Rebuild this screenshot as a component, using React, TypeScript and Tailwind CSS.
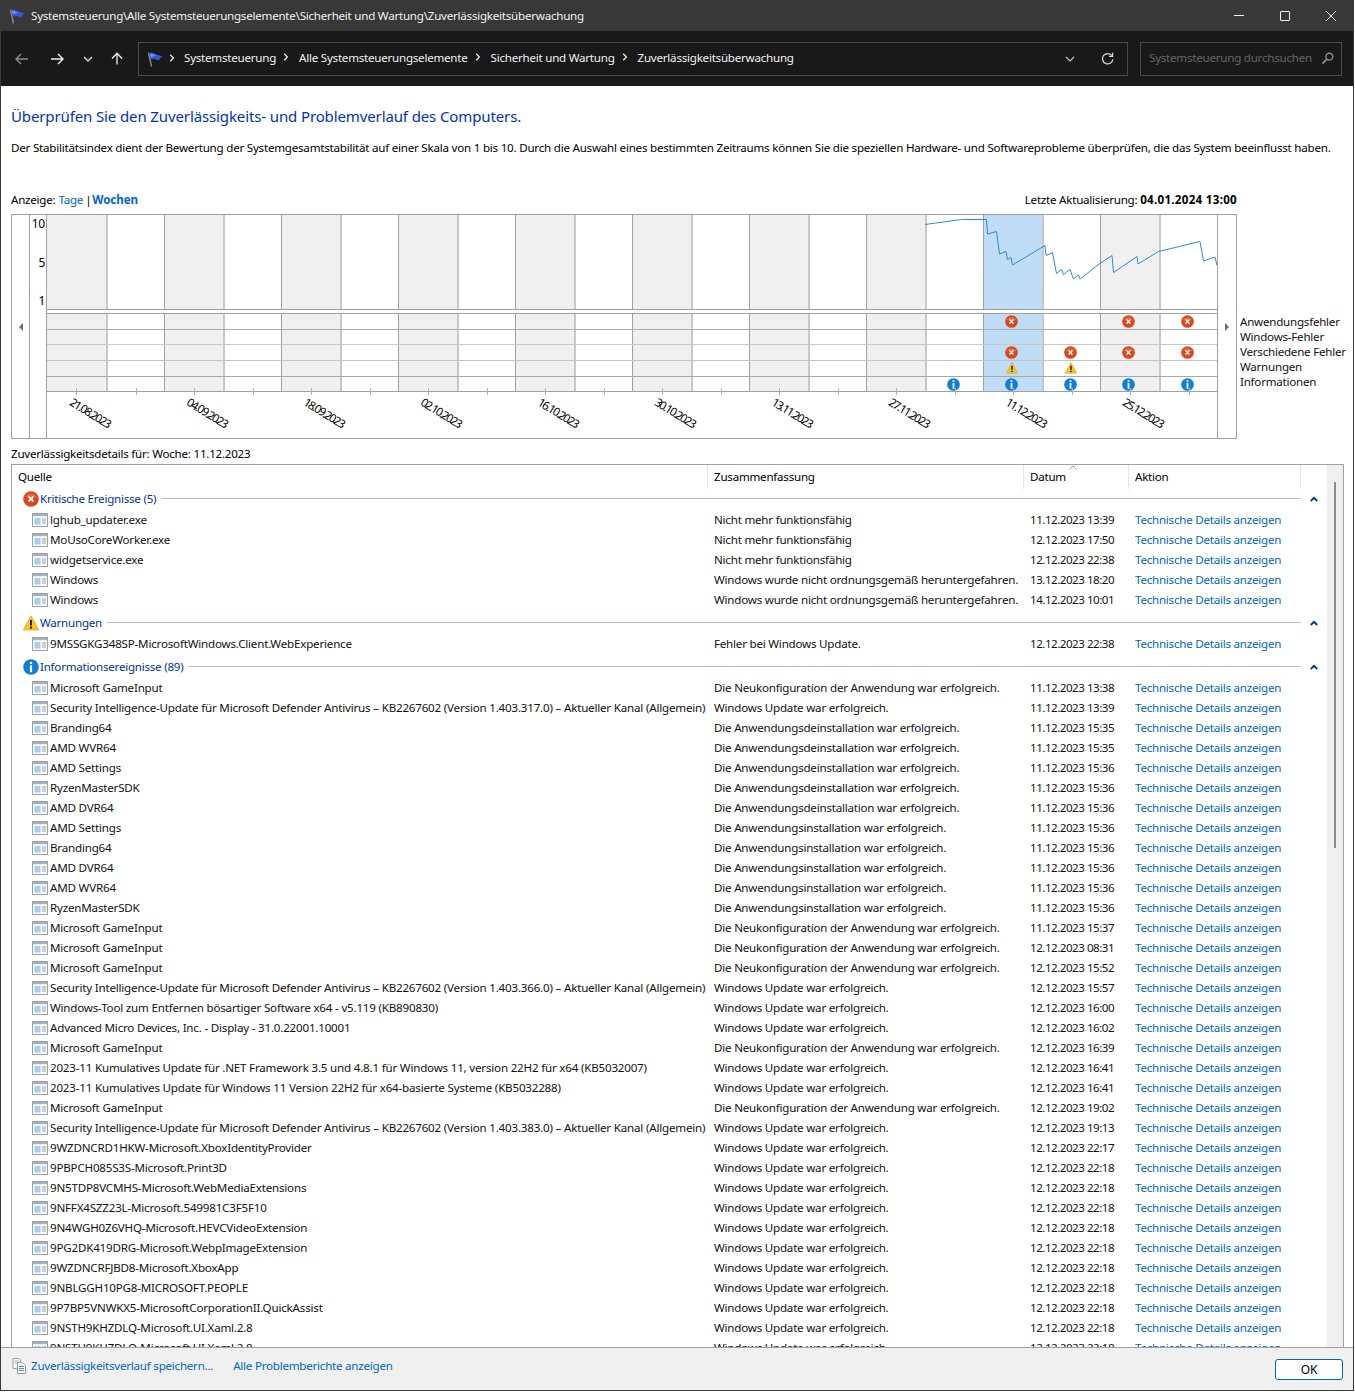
const DEINST = 'Die Anwendungsdeinstallation war erfolgreich.';
const INST = 'Die Anwendungsinstallation war erfolgreich.';
const NEUKONF = 'Die Neukonfiguration der Anwendung war erfolgreich.';
const UPDATE = 'Windows Update war erfolgreich.';
const CRASH = 'Nicht mehr funktionsfähig';
const SHUTDOWN = 'Windows wurde nicht ordnungsgemäß heruntergefahren.';
const GAMEINPUT = 'Microsoft GameInput';
const defender = (v: string) =>
  `Security Intelligence-Update für Microsoft Defender Antivirus – KB2267602 (Version ${v}) – Aktueller Kanal (Allgemein)`;

const critical = [
  ['lghub_updater.exe', CRASH, '11.12.2023 13:39'],
  ['MoUsoCoreWorker.exe', CRASH, '12.12.2023 17:50'],
  ['widgetservice.exe', CRASH, '12.12.2023 22:38'],
  ['Windows', SHUTDOWN, '13.12.2023 18:20'],
  ['Windows', SHUTDOWN, '14.12.2023 10:01'],
];

const warnings = [['9MSSGKG348SP-MicrosoftWindows.Client.WebExperience', 'Fehler bei Windows Update.', '12.12.2023 22:38']];

const infos = [
  [GAMEINPUT, NEUKONF, '11.12.2023 13:38'],
  [defender('1.403.317.0'), UPDATE, '11.12.2023 13:39'],
  ['Branding64', DEINST, '11.12.2023 15:35'],
  ['AMD WVR64', DEINST, '11.12.2023 15:35'],
  ['AMD Settings', DEINST, '11.12.2023 15:36'],
  ['RyzenMasterSDK', DEINST, '11.12.2023 15:36'],
  ['AMD DVR64', DEINST, '11.12.2023 15:36'],
  ['AMD Settings', INST, '11.12.2023 15:36'],
  ['Branding64', INST, '11.12.2023 15:36'],
  ['AMD DVR64', INST, '11.12.2023 15:36'],
  ['AMD WVR64', INST, '11.12.2023 15:36'],
  ['RyzenMasterSDK', INST, '11.12.2023 15:36'],
  [GAMEINPUT, NEUKONF, '11.12.2023 15:37'],
  [GAMEINPUT, NEUKONF, '12.12.2023 08:31'],
  [GAMEINPUT, NEUKONF, '12.12.2023 15:52'],
  [defender('1.403.366.0'), UPDATE, '12.12.2023 15:57'],
  ['Windows-Tool zum Entfernen bösartiger Software x64 - v5.119 (KB890830)', UPDATE, '12.12.2023 16:00'],
  ['Advanced Micro Devices, Inc. - Display - 31.0.22001.10001', UPDATE, '12.12.2023 16:02'],
  [GAMEINPUT, NEUKONF, '12.12.2023 16:39'],
  ['2023-11 Kumulatives Update für .NET Framework 3.5 und 4.8.1 für Windows 11, version 22H2 für x64 (KB5032007)', UPDATE, '12.12.2023 16:41'],
  ['2023-11 Kumulatives Update für Windows 11 Version 22H2 für x64-basierte Systeme (KB5032288)', UPDATE, '12.12.2023 16:41'],
  [GAMEINPUT, NEUKONF, '12.12.2023 19:02'],
  [defender('1.403.383.0'), UPDATE, '12.12.2023 19:13'],
  ['9WZDNCRD1HKW-Microsoft.XboxIdentityProvider', UPDATE, '12.12.2023 22:17'],
  ['9PBPCH085S3S-Microsoft.Print3D', UPDATE, '12.12.2023 22:18'],
  ['9N5TDP8VCMHS-Microsoft.WebMediaExtensions', UPDATE, '12.12.2023 22:18'],
  ['9NFFX4SZZ23L-Microsoft.549981C3F5F10', UPDATE, '12.12.2023 22:18'],
  ['9N4WGH0Z6VHQ-Microsoft.HEVCVideoExtension', UPDATE, '12.12.2023 22:18'],
  ['9PG2DK419DRG-Microsoft.WebpImageExtension', UPDATE, '12.12.2023 22:18'],
  ['9WZDNCRFJBD8-Microsoft.XboxApp', UPDATE, '12.12.2023 22:18'],
  ['9NBLGGH10PG8-MICROSOFT.PEOPLE', UPDATE, '12.12.2023 22:18'],
  ['9P7BP5VNWKX5-MicrosoftCorporationII.QuickAssist', UPDATE, '12.12.2023 22:18'],
  ['9NSTH9KHZDLQ-Microsoft.UI.Xaml.2.8', UPDATE, '12.12.2023 22:18'],
  ['9NSTH9KHZDLQ-Microsoft.UI.Xaml.2.8', UPDATE, '12.12.2023 22:18'],
];

const dates = ['21.08.2023', '04.09.2023', '18.09.2023', '02.10.2023', '16.10.2023', '30.10.2023', '13.11.2023', '27.11.2023', '11.12.2023', '25.12.2023'];

// marker rows of the chart: column index -> icon
const markerRows: Record<number, 'e' | 'w' | 'i'>[] = [
  { 16: 'e', 18: 'e', 19: 'e' },
  {},
  { 16: 'e', 17: 'e', 18: 'e', 19: 'e' },
  { 16: 'w', 17: 'w' },
  { 15: 'i', 16: 'i', 17: 'i', 18: 'i', 19: 'i' },
];
const rowBorders = ['border-[#adadad]', 'border-[#c8c8c8]', 'border-[#c4c4c4]', 'border-[#a8a8a8]', 'border-[#a0a0a0]'];

const linePoints = [
  [925, 224.5], [961.5, 219.5], [983, 219.5], [986.5, 219.5], [987.5, 234], [996.5, 231.5], [999.5, 254], [1006, 251.5], [1007.5, 259.5],
  [1011, 257.5], [1012.5, 265], [1045, 245.5], [1046, 255.5], [1052.5, 252.5], [1056.5, 273.5], [1061.5, 269.5], [1063.5, 274.5], [1070, 269.5],
  [1073.5, 279], [1078.5, 275], [1080, 279], [1100, 263.5], [1112, 255.5], [1113.5, 272.5], [1137, 256.5], [1138, 264], [1158.5, 251.5],
  [1200, 241.5], [1203.5, 261], [1215, 257], [1217, 265.5],
].map((p) => p.join(',')).join(' ');

function cellClass(i: number) {
  const bg = i === 16 ? 'bg-[#bfddf6]' : i % 2 === 0 ? 'bg-[#f0f0f0]' : 'bg-white';
  if (i === 0) return bg;
  return i % 2 === 1 ? `${bg} border-l-2 border-l-[#c8c8c8]` : `${bg} border-l border-l-[#a0a0a0]`;
}

function Flag({ className }: { className?: string }) {
  return (
    <svg viewBox="0 0 16 16" className={className}>
      <path d="M1.5 1.5 L4.5 15.5" stroke="#858585" strokeWidth="1.5" fill="none" />
      <path d="M2.5 2 C5 0.5 6.5 2.5 9 3.2 L15.8 5.5 C13.5 6.5 13 8 11.5 9.5 C9 8 6.5 7.5 3.8 8.8 Z" fill="#3658d8" />
      <path d="M3 3 C5 2 7 3.5 9 4.5 L3.6 6.5 Z" fill="#6d8cf2" />
    </svg>
  );
}

function ErrorIcon({ size = 14 }: { size?: number }) {
  return (
    <svg viewBox="0 0 16 16" width={size} height={size} className="shrink-0">
      <circle cx="8" cy="8" r="7.8" fill="#d9491d" />
      <path d="M2 6 A7 7 0 0 1 14 6 Z" fill="#e8683c" />
      <path d="M5.6 5.6 L10.4 10.4 M10.4 5.6 L5.6 10.4" stroke="#fff" strokeWidth="1.7" />
    </svg>
  );
}

function WarnIcon({ size = 14 }: { size?: number }) {
  return (
    <svg viewBox="0 0 16 16" width={size} height={size} className="shrink-0">
      <path d="M8 0.8 L15.8 15 L0.2 15 Z" fill="#f7c325" stroke="#d99a10" strokeWidth="0.6" />
      <rect x="7" y="5" width="2" height="5.5" fill="#2a2000" />
      <rect x="7" y="11.6" width="2" height="2" fill="#2a2000" />
    </svg>
  );
}

function InfoIcon({ size = 14 }: { size?: number }) {
  return (
    <svg viewBox="0 0 16 16" width={size} height={size} className="shrink-0">
      <circle cx="8" cy="8" r="7.8" fill="#0f7fd4" />
      <rect x="6.9" y="2.8" width="2.2" height="2.2" fill="#fff" />
      <rect x="6.9" y="6.2" width="2.2" height="7" fill="#fff" />
    </svg>
  );
}

function Marker({ kind }: { kind: 'e' | 'w' | 'i' }) {
  if (kind === 'e') return <ErrorIcon size={13} />;
  if (kind === 'w') return <WarnIcon size={12} />;
  return <InfoIcon size={13} />;
}

function RowIcon() {
  return (
    <svg viewBox="0 0 16 14" width="16" height="14" className="shrink-0">
      <rect x="0.5" y="0.5" width="15" height="13" fill="#fbfcfd" stroke="#98a2ad" />
      <rect x="1" y="1" width="14" height="2.2" fill="#a9b1ba" />
      <rect x="2.5" y="5" width="6" height="6.5" fill="#a9cdf0" />
      <path d="M10 6 H14 M10 8 H14 M10 10 H14" stroke="#9aa3ad" strokeWidth="1" />
    </svg>
  );
}

function Row({ row }: { row: string[] }) {
  return (
    <div className="flex h-5 shrink-0 items-center leading-5 text-[#111]">
      <div className="flex w-[696px] items-center gap-[2px] overflow-hidden whitespace-nowrap pl-[20px] tracking-[-0.2px]">
        <RowIcon />
        <span>{row[0]}</span>
      </div>
      <div className="w-[316px] overflow-hidden whitespace-nowrap pl-[6px] tracking-[-0.22px]">{row[1]}</div>
      <div className="w-[105px] whitespace-nowrap pl-[6px] tracking-[-0.49px]">{row[2]}</div>
      <div className="whitespace-nowrap pl-[6px] text-[#0066cc]">Technische Details anzeigen</div>
    </div>
  );
}

function GroupHeader({ icon, label, className }: { icon: React.ReactNode; label: string; className: string }) {
  return (
    <div className={`flex shrink-0 items-center pl-[10px] ${className}`}>
      <div className="flex w-[18px] justify-center">{icon}</div>
      <span className="whitespace-nowrap text-[#003399]">{label}</span>
      <div className="ml-[5px] h-px flex-1 bg-[#b0bedc]" />
      <div className="flex w-[26px] justify-center">
        <svg viewBox="0 0 8 6" width="8" height="6">
          <path d="M0.8 5 L4 1.8 L7.2 5" fill="none" stroke="#00338f" strokeWidth="1.8" />
        </svg>
      </div>
    </div>
  );
}

function HeaderCell({ label, className }: { label: string; className: string }) {
  return <div className={`flex h-6 items-center border-r border-r-[#e5e5e5] pl-[6px] ${className}`}>{label}</div>;
}

function Sep() {
  return (
    <div className="flex w-[23px] shrink-0 justify-center pr-[3px]">
      <svg viewBox="0 0 6 8" width="6" height="8">
        <path d="M1.2 0.8 L4.4 4 L1.2 7.2" fill="none" stroke="#e8e8e8" strokeWidth="1.3" />
      </svg>
    </div>
  );
}

export default function App() {
  return (
    <div className="h-[1392px] w-[1355px] bg-white">
      <div
        className="flex h-[1391px] w-[1354px] flex-col overflow-hidden border-x border-b border-[#3a3a3a] text-[11.6px] tracking-[-0.24px] text-black"
        style={{ fontFamily: '"Noto Sans", sans-serif' }}
      >
        {/* title bar */}
        <div className="flex h-[31px] shrink-0 items-center bg-[#383838] pl-[8px] pr-[17px] text-[#f2f2f2]">
          <Flag className="h-4 w-4" />
          <span className="ml-[6px] whitespace-nowrap">Systemsteuerung\Alle Systemsteuerungselemente\Sicherheit und Wartung\Zuverlässigkeitsüberwachung</span>
          <div className="ml-auto flex items-center gap-[36px]">
            <div className="h-px w-[10px] bg-[#eee]" />
            <div className="h-[10px] w-[10px] rounded-[1px] border border-[#eee]" />
            <svg viewBox="0 0 10 10" width="10" height="10">
              <path d="M0 0 L10 10 M10 0 L0 10" stroke="#eee" strokeWidth="1" />
            </svg>
          </div>
        </div>

        {/* nav bar */}
        <div className="flex h-[55px] shrink-0 items-center bg-[#191919] pl-[14px] pr-[11px]">
          <svg viewBox="0 0 14 12" width="14" height="12">
            <path d="M13 6 H1.5 M6 1 L1 6 L6 11" fill="none" stroke="#8a8a8a" strokeWidth="1.4" />
          </svg>
          <svg viewBox="0 0 14 12" width="14" height="12" className="ml-[21px]">
            <path d="M1 6 H12.5 M8 1 L13 6 L8 11" fill="none" stroke="#eee" strokeWidth="1.4" />
          </svg>
          <svg viewBox="0 0 10 6" width="10" height="6" className="ml-[19px]">
            <path d="M1 1 L5 5 L9 1" fill="none" stroke="#ddd" strokeWidth="1.3" />
          </svg>
          <svg viewBox="0 0 12 13" width="12" height="13" className="ml-[18px]">
            <path d="M6 12.5 V1.5 M1 6.5 L6 1.2 L11 6.5" fill="none" stroke="#eee" strokeWidth="1.3" />
          </svg>
          <div className="ml-[15px] flex h-[34px] w-[990px] items-center border border-[#4a4a4a] pl-[8px] text-[#f2f2f2]">
            <Flag className="h-4 w-4" />
            <div className="ml-[6px] flex items-center whitespace-nowrap pb-[2px]">
              <div className="flex w-[14px] justify-start pt-[2px]">
                <svg viewBox="0 0 6 8" width="6" height="8">
                  <path d="M1.2 0.8 L4.4 4 L1.2 7.2" fill="none" stroke="#e8e8e8" strokeWidth="1.3" />
                </svg>
              </div>
              <span className="ml-[1px]">Systemsteuerung</span>
              <Sep />
              <span>Alle Systemsteuerungselemente</span>
              <Sep />
              <span>Sicherheit und Wartung</span>
              <Sep />
              <span>Zuverlässigkeitsüberwachung</span>
            </div>
            <svg viewBox="0 0 10 6" width="10" height="6" className="ml-auto">
              <path d="M1 1 L5 5 L9 1" fill="none" stroke="#ccc" strokeWidth="1.1" />
            </svg>
            <svg viewBox="0 0 14 14" width="13" height="13" className="ml-[26px] mr-[13px]">
              <path d="M11.8 4 A5.6 5.6 0 1 0 12.8 8" fill="none" stroke="#ddd" strokeWidth="1.3" />
              <path d="M12.5 0.8 V4.6 H8.7" fill="none" stroke="#ddd" strokeWidth="1.3" />
            </svg>
          </div>
          <div className="ml-[12px] flex h-[34px] flex-1 items-center border border-[#4a4a4a] pl-[8px] text-[#666]">
            <span className="whitespace-nowrap pb-[2px]">Systemsteuerung durchsuchen</span>
            <svg viewBox="0 0 14 14" width="13" height="13" className="ml-auto mr-[7px]">
              <circle cx="9" cy="5" r="3.7" fill="none" stroke="#8a8a8a" strokeWidth="1.6" />
              <path d="M6.2 7.8 L1.5 12.5" stroke="#8a8a8a" strokeWidth="2" />
            </svg>
          </div>
        </div>

        {/* main content */}
        <div className="flex min-h-0 flex-1 flex-col pl-[10px] pr-[9px]">
          <h1 className="mt-[20px] h-5 whitespace-nowrap text-[15px] font-normal leading-5 tracking-[-0.12px] text-[#0033bc]">
            Überprüfen Sie den Zuverlässigkeits- und Problemverlauf des Computers.
          </h1>
          <p className="mt-[12px] h-5 whitespace-nowrap leading-5 tracking-[-0.228px]">
            Der Stabilitätsindex dient der Bewertung der Systemgesamtstabilität auf einer Skala von 1 bis 10. Durch die Auswahl eines bestimmten Zeitraums können Sie die speziellen Hardware- und Softwareprobleme überprüfen, die das System beeinflusst haben.
          </p>

          <div className="mt-[33px] flex h-[17px] w-[1226px] items-center justify-between whitespace-nowrap">
            <div className="flex items-center">
              <span>Anzeige:</span>
              <span className="ml-[3px] text-[#0066cc]">Tage</span>
              <span className="ml-[2px] mr-[1px]">|</span>
              <span className="font-bold tracking-[-0.1px] text-[#0066cc]">Wochen</span>
            </div>
            <div>
              Letzte Aktualisierung: <span className="font-bold tracking-[0.28px]">04.01.2024 13:00</span>
            </div>
          </div>

          {/* chart */}
          <div className="mt-[6px] flex shrink-0">
            <div className="flex h-[225px] w-[1226px] shrink-0 border border-[#a0a0a0]">
              <div className="flex w-[18px] items-center justify-center border-r border-r-[#a0a0a0]">
                <div className="h-0 w-0 border-y-[4px] border-r-[4px] border-y-transparent border-r-[#6f6f6f]" />
              </div>
              <div className="relative flex h-[94px] w-[16px] flex-col items-end pr-[1px] pt-[1px] text-[12px]">
                <span className="h-[39px] leading-[16px]">10</span>
                <span className="h-[39px] leading-[16px]">5</span>
                <span className="leading-[16px]">1</span>
              </div>
              <div className="flex w-[1171px] flex-col border-l border-l-[#a0a0a0]">
                <div className="relative h-[95px] border-b border-b-[#a0a0a0]">
                  <div className="grid h-full grid-cols-[repeat(20,minmax(0,1fr))]">
                    {Array.from({ length: 20 }, (_, i) => (
                      <div key={i} className={cellClass(i)} />
                    ))}
                  </div>
                  <svg viewBox="47 215 1170 94" className="absolute inset-0 h-full w-full">
                    <polyline points={linePoints} fill="none" stroke="#2a8ae0" strokeWidth="1" />
                  </svg>
                </div>
                <div className="h-[4px] border-b border-b-[#a0a0a0]" />
                {markerRows.map((row, r) => (
                  <div key={r} className={`grid h-[15.7px] grid-cols-[repeat(20,minmax(0,1fr))] border-b ${rowBorders[r]}`}>
                    {Array.from({ length: 20 }, (_, i) => (
                      <div key={i} className={`relative flex items-center justify-center ${cellClass(i)}`}>
                        {row[i] && (
                          <div className="-translate-x-px">
                            <Marker kind={row[i]} />
                          </div>
                        )}
                        {r === 4 && <div className="absolute -bottom-[4px] left-1/2 h-[7px] w-px bg-[#b4b4b4]" />}
                      </div>
                    ))}
                  </div>
                ))}
                <div className="grid flex-1 grid-cols-10">
                  {dates.map((d) => (
                    <div key={d} className="overflow-visible">
                      <div className="ml-[13px] mt-[13px] w-[60px] rotate-[32deg] whitespace-nowrap text-center text-[11.6px] leading-4 tracking-[-1.4px]">{d}</div>
                    </div>
                  ))}
                </div>
              </div>
              <div className="flex flex-1 items-center justify-center border-l border-l-[#a0a0a0]">
                <div className="h-0 w-0 border-y-[4px] border-l-[4px] border-y-transparent border-l-[#6f6f6f]" />
              </div>
            </div>
            <div className="ml-[3px] mt-[100px] flex flex-col whitespace-nowrap leading-[15px] text-[#111]">
              <span>Anwendungsfehler</span>
              <span>Windows-Fehler</span>
              <span>Verschiedene Fehler</span>
              <span>Warnungen</span>
              <span>Informationen</span>
            </div>
          </div>

          <div className="mt-[7px] h-[16px] whitespace-nowrap leading-4">Zuverlässigkeitsdetails für: Woche: 11.12.2023</div>

          {/* details table */}
          <div className="mt-[2px] flex min-h-0 flex-1 border-x border-t border-[#a0a0a0]">
            <div className="flex min-w-0 flex-1 flex-col overflow-hidden">
              <div className="relative flex h-6 shrink-0">
                <HeaderCell label="Quelle" className="w-[696px]" />
                <HeaderCell label="Zusammenfassung" className="w-[316px]" />
                <HeaderCell label="Datum" className="w-[105px]" />
                <HeaderCell label="Aktion" className="w-[172px]" />
                <svg viewBox="0 0 8 5" width="8" height="5" className="absolute left-[1057px] top-0">
                  <path d="M0.5 4.5 L4 1 L7.5 4.5" fill="none" stroke="#9a9a9a" strokeWidth="1" />
                </svg>
              </div>
              <GroupHeader icon={<ErrorIcon size={16} />} label="Kritische Ereignisse (5)" className="h-[21px] pb-[2px]" />
              {critical.map((r, i) => (
                <Row key={i} row={r} />
              ))}
              <GroupHeader icon={<WarnIcon size={16} />} label="Warnungen" className="h-6 pt-[1px]" />
              {warnings.map((r, i) => (
                <Row key={i} row={r} />
              ))}
              <GroupHeader icon={<InfoIcon size={16} />} label="Informationsereignisse (89)" className="h-6 pt-[1px]" />
              {infos.map((r, i) => (
                <Row key={i} row={r} />
              ))}
            </div>
            <div className="flex w-[16px] shrink-0 justify-center bg-[#f0f0f0] pt-[17px]">
              <div className="h-[366px] w-[2px] bg-[#8c8c8c]" />
            </div>
          </div>
        </div>

        {/* footer */}
        <div className="flex h-[43px] shrink-0 border-t border-[#a0a0a0] bg-[#f0f0f0] pl-[10px] pr-[10px]">
          <div className="mt-[8px] flex h-5 items-center whitespace-nowrap text-[#0066cc]">
            <svg viewBox="0 0 16 16" width="16" height="16">
              <path d="M2 0.5 H8 L9.5 2 V10.5 H2 Z" fill="#f7f7f7" stroke="#a0a0a0" />
              <path d="M3.5 3 H7.5 M3.5 5 H7.5" stroke="#8fb4de" strokeWidth="1" />
              <path d="M6.5 4.5 H11.5 L14.5 7.5 V15.5 H6.5 Z" fill="#fff" stroke="#9a9a9a" />
              <path d="M8 8.5 H13 M8 10.5 H13 M8 12.5 H13" stroke="#4f8ad0" strokeWidth="1" />
            </svg>
            <span className="ml-[4px]">Zuverlässigkeitsverlauf speichern...</span>
            <span className="ml-[20px]">Alle Problemberichte anzeigen</span>
          </div>
          <button className="ml-auto mt-[11px] h-[21px] w-[68px] rounded-[3px] border border-[#0067c0] bg-[#fdfdfd] text-[12px] leading-none text-black">OK</button>
        </div>
      </div>
    </div>
  );
}
